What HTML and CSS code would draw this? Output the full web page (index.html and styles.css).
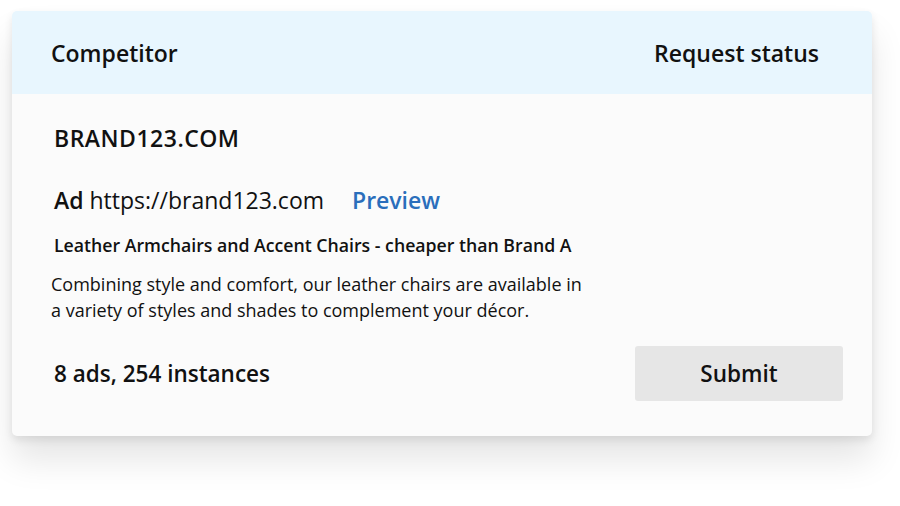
FILE: index.html
```html
<!DOCTYPE html>
<html lang="en">

<head>
    <meta charset="UTF-8">
    <meta name="viewport" content="width=device-width, initial-scale=1.0">
    <title>Competitor request</title>
    <link rel="stylesheet" href="styles.css">
</head>

<body>
    <div class="card">
        <div class="card-header">
            <span>Competitor</span>
            <span>Request status</span>
        </div>

        <div class="card-body">
            <h2 class="brand">BRAND123.COM</h2>

            <div class="ad-line">
                <span class="ad-label">Ad</span> https://brand123.com
                <a class="preview" href="#">Preview</a>
            </div>

            <h3 class="ad-title">Leather Armchairs and Accent Chairs - cheaper than Brand A</h3>
            <p class="ad-desc">Combining style and comfort, our leather chairs are available in a variety of styles and shades to complement your décor.</p>

            <div class="card-footer">
                <span class="count">8 ads, 254 instances</span>
                <button class="submit">Submit</button>
            </div>
        </div>
    </div>
</body>

</html>
```

FILE: styles.css
```css
* {
    box-sizing: border-box;
    margin: 0;
    padding: 0;
}

html,
body {
    min-height: 100vh;
}

body {
    font-family: 'Open Sans', sans-serif;
    background-color: #fff;
    color: #111;
    padding: 11px 28px 0 12px;
}

.card {
    width: 860px;
    background: #fbfbfb;
    border-radius: 5px;
    overflow: hidden;
    box-shadow: 0 24px 34px rgba(0, 0, 0, 0.1), 0 4px 8px rgba(0, 0, 0, 0.09);
}

.card-header {
    height: 83px;
    background: #e8f6fe;
    display: flex;
    justify-content: space-between;
    align-items: center;
    padding: 0 53px 0 39px;
    font-size: 23px;
    font-weight: 600;
}

.card-body {
    padding: 29px 29px 35px 42px;
}

.brand {
    font-size: 23px;
    line-height: 30px;
    font-weight: 600;
    letter-spacing: 0.5px;
    margin-bottom: 32px;
}

.ad-line {
    font-size: 23px;
    line-height: 30px;
    margin-bottom: 19px;
}

.ad-label {
    font-weight: 600;
}

.preview {
    color: #2a6ebb;
    font-weight: 600;
    text-decoration: none;
    margin-left: 22px;
}

.ad-title {
    font-size: 17.7px;
    line-height: 22px;
    font-weight: 600;
    margin-bottom: 15px;
}

.ad-desc {
    font-size: 18px;
    line-height: 26px;
    width: 545px;
    margin-left: -3px;
}

.card-footer {
    display: flex;
    justify-content: space-between;
    align-items: center;
    margin-top: 23px;
}

.count {
    font-size: 22.5px;
    font-weight: 600;
}

.submit {
    width: 208px;
    height: 55px;
    background: #e6e6e6;
    border: none;
    border-radius: 3px;
    font-family: 'Open Sans', sans-serif;
    font-size: 22.5px;
    font-weight: 600;
    color: #111;
}
```
